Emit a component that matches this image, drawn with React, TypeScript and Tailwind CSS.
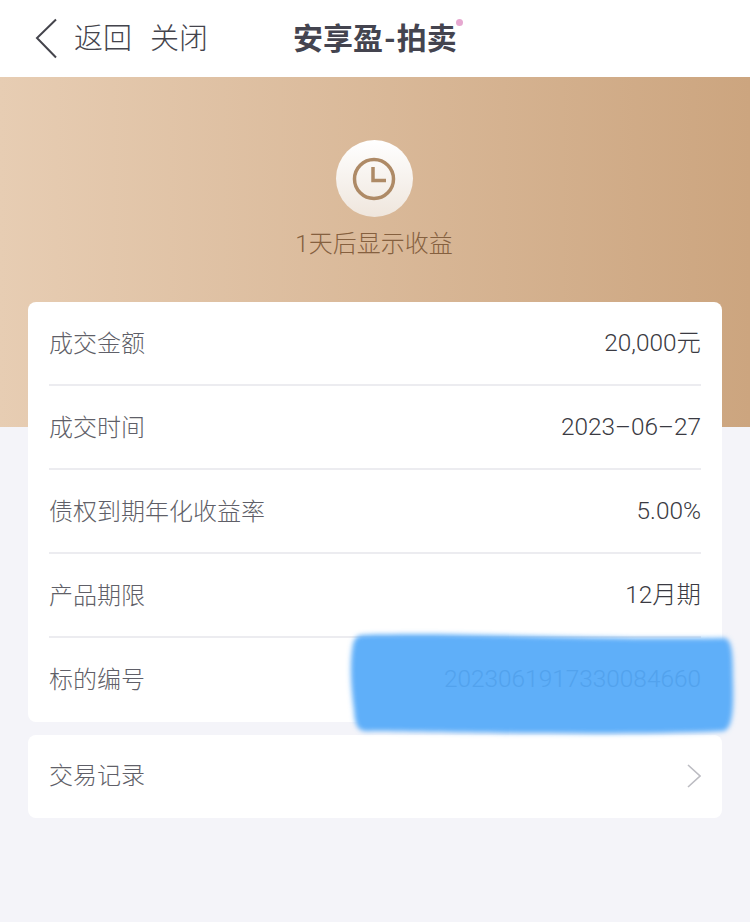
import React from "react";

const font = { fontFamily: 'Roboto, "Noto Sans CJK SC", "Liberation Sans", sans-serif' };

const rows = [
  ["成交金额", "20,000元"],
  ["成交时间", "2023–06–27"],
  ["债权到期年化收益率", "5.00%"],
  ["产品期限", "12月期"],
];

function Row({ label, value }: { label: string; value: string }) {
  return (
    <div className="h-[84px] flex items-center justify-between relative pb-[1px]">
      <span className="text-[24px] font-light text-[#5f5f68] leading-none">{label}</span>
      <span className="text-[24.4px] font-light text-[#3a3a42] leading-none">{value}</span>
      <div className="absolute left-0 right-0 bottom-0 h-[2px] bg-[#ececf0]" />
    </div>
  );
}

export default function App() {
  return (
    <div className="w-[750px] h-[922px] bg-[#f4f4f9] overflow-hidden relative" style={font}>
      <header className="h-[77px] bg-white flex items-center relative">
        <svg width="24" height="42" viewBox="0 0 24 42" className="ml-[35px]" fill="none">
          <path d="M21 1.5 L2 20 L21 39.5" stroke="#44444c" strokeWidth="2" />
        </svg>
        <span className="ml-[15px] pt-[2px] text-[29px] font-light text-[#44444c] leading-none">返回</span>
        <span className="ml-[18px] pt-[2px] text-[29px] font-light text-[#44444c] leading-none">关闭</span>
        <span className="ml-[85px] text-[30px] font-bold text-[#44444f] leading-none">
          安享盈<span className="mx-[1px]">-</span>拍卖
        </span>
        <span className="absolute left-[456px] top-[19px] w-[7px] h-[7px] rounded-full bg-[#e6a8d0]" />
      </header>

      <section className="h-[350px] bg-gradient-to-r from-[#e7cdb3] to-[#cca57f] flex flex-col items-center pt-[63px]">
        <div className="w-[77px] h-[77px] rounded-full bg-gradient-to-b from-white to-[#efe6dd] flex items-center justify-center -translate-x-[1px]">
          <svg width="44" height="44" viewBox="0 0 44 44" fill="none" stroke="#ae8a66" strokeWidth="3.5">
            <circle cx="22" cy="22" r="19.5" />
            <path d="M21 10 V23.5 H34" />
          </svg>
        </div>
        <div className="mt-[13px] text-[24px] font-light text-[#85603f] leading-[28px] -translate-x-[1px]">1天后显示收益</div>
      </section>

      <main className="mx-[28px] mt-[-125px] relative flex flex-col gap-[13px]">
        <div className="bg-white rounded-[8px] px-[21px]">
          {rows.map(([l, v]) => (
            <Row key={l} label={l} value={v} />
          ))}
          <div className="h-[84px] flex items-center justify-between relative pb-[1px]">
            <span className="text-[24px] font-light text-[#5f5f68] leading-none">标的编号</span>
          </div>
        </div>
        <div className="bg-white rounded-[8px] px-[21px] h-[83px] flex items-center justify-between">
          <span className="text-[24px] font-light text-[#5f5f68] leading-none pb-[1px]">交易记录</span>
          <svg width="14" height="24" viewBox="0 0 14 24" fill="none" className="-translate-y-[1px]">
            <path d="M1 1 L13 12 L1 23" stroke="#bcbcc2" strokeWidth="1.6" />
          </svg>
        </div>
      </main>

      <svg className="absolute left-[340px] top-[620px]" width="410" height="130" viewBox="0 0 410 130" fill="none">
        <defs>
          <filter id="soft" x="-5%" y="-15%" width="110%" height="130%">
            <feGaussianBlur stdDeviation="2.4" />
          </filter>
        </defs>
        <path
          d="M24 15 C 120 12 260 20 384 18 C 392 19 393 32 393 60 C 394 92 392 108 384 111 C 280 116 120 112 32 111 C 18 113 15 107 14 90 C 10 60 10 40 13 24 C 15 17 18 15 24 15 Z"
          fill="#5eaff9"
          filter="url(#soft)"
        />
      </svg>
      <span className="absolute right-[49px] top-[667px] text-[24.4px] font-light text-[#52a2ed] leading-none">
        2023061917330084660
      </span>
    </div>
  );
}
